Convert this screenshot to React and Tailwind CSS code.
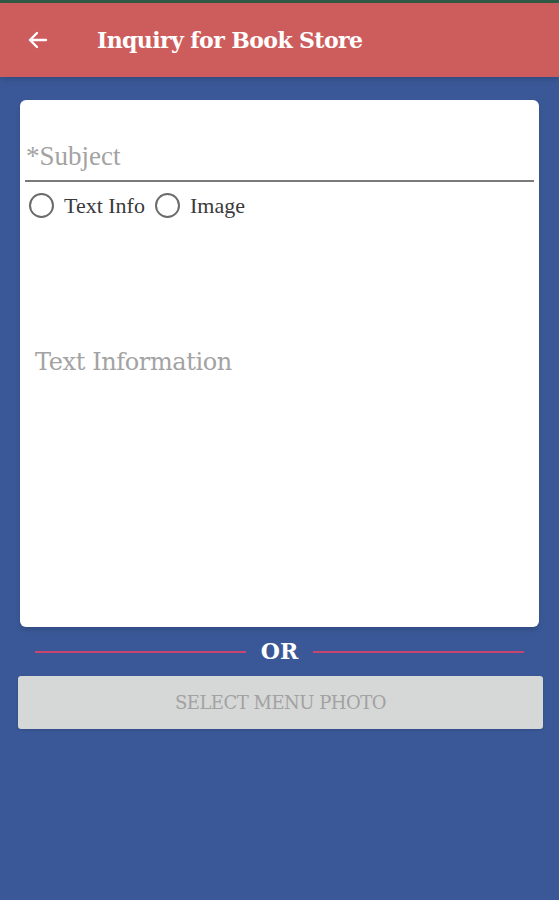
import React, { useState } from 'react';

const Radio = ({ label, checked, onClick }) => (
  <button onClick={onClick} className="flex items-center gap-[10px]">
    <span className="w-[25px] h-[25px] rounded-full border-2 border-[#6b6b6b] flex items-center justify-center">
      {checked && <span className="w-[13px] h-[13px] rounded-full bg-[#6b6b6b]" />}
    </span>
    <span
      className="text-[22px] text-[#3a3a3a] leading-none"
      style={{ fontFamily: '"Liberation Serif", serif' }}
    >
      {label}
    </span>
  </button>
);

const App = () => {
  const [mode, setMode] = useState(null);

  return (
    <div
      className="w-[559px] h-[900px] bg-[#3a5897] flex flex-col"
      style={{ fontFamily: '"DejaVu Serif", "Liberation Serif", serif' }}
    >
      {/* Status strip + App bar */}
      <div className="h-[3px] bg-[#2e5a45]" />
      <header className="h-[74px] bg-[#cd5c5c] flex items-center pl-[26px] shadow-md">
        <svg width="24" height="24" viewBox="0 0 24 24" fill="none" stroke="white" strokeWidth="2.4" strokeLinecap="round" strokeLinejoin="round">
          <path d="M20 12H4M11 5l-7 7 7 7" />
        </svg>
        <h1 className="ml-[47px] text-[22px] text-white font-semibold tracking-[-0.6px]">Inquiry for Book Store</h1>
      </header>

      {/* Form card */}
      <div className="mx-[20px] mt-[23px] h-[527px] bg-white rounded-[6px] shadow-md flex flex-col px-[5px]">
        <div className="h-[82px] flex items-end pb-[4px] border-b-2 border-[#7a7a7a]">
          <input
            placeholder="*Subject"
            className="w-full text-[27px] text-[#555] placeholder-[#a3a3a3] outline-none px-[1px]"
            style={{ fontFamily: '"Liberation Serif", serif' }}
          />
        </div>
        <div className="flex items-center gap-[10px] mt-[11px] pl-[4px]">
          <Radio label="Text Info" checked={mode === 'text'} onClick={() => setMode('text')} />
          <Radio label="Image" checked={mode === 'image'} onClick={() => setMode('image')} />
        </div>
        <textarea
          placeholder="Text Information"
          className="mt-[126px] flex-1 resize-none outline-none px-[10px] text-[24px] text-[#555] placeholder-[#a3a3a3] tracking-[-0.4px]"
        />
      </div>

      {/* OR divider */}
      <div className="mx-[35px] mt-[8px] flex items-center">
        <div className="flex-1 h-[2px] bg-[#c8456f]" />
        <span className="px-[15px] text-[22px] font-bold text-white">OR</span>
        <div className="flex-1 h-[2px] bg-[#c8456f]" />
      </div>

      {/* Photo button */}
      <button className="ml-[18px] mr-[16px] mt-[8px] h-[53px] bg-[#d6d7d7] rounded-[3px] shadow text-[18px] text-[#a2a2a2] tracking-[-0.5px]">
        SELECT MENU PHOTO
      </button>
    </div>
  );
};

export default App;
